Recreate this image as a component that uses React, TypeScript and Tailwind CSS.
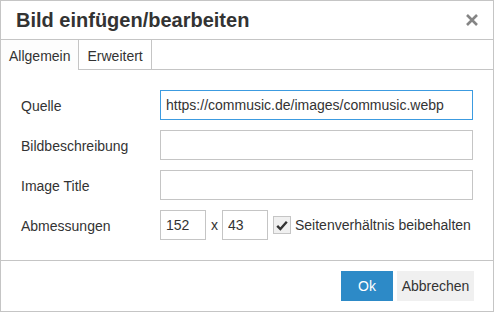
import React from 'react';

const font = { fontFamily: '"Liberation Sans", Arial, sans-serif' };

export default function App() {
  const rows = [
    { label: 'Quelle', value: 'https://commusic.de/images/commusic.webp', focused: true },
    { label: 'Bildbeschreibung', value: '' },
    { label: 'Image Title', value: '' },
  ];

  return (
    <div
      className="w-[494px] h-[312px] bg-white border border-[#c5c5c5] flex flex-col text-[#333] text-[14px]"
      style={font}
    >
      {/* Title bar */}
      <div className="h-[39px] shrink-0 border-b border-[#c5c5c5] flex items-center justify-between pl-[15px] pr-[12px]">
        <h1 className="text-[20px] leading-[20px] font-bold text-[#333]">Bild einfügen/bearbeiten</h1>
        <button className="w-[16px] h-[16px] flex items-center justify-center mr-[1px]">
          <svg width="12" height="12" viewBox="0 0 12 12">
            <path d="M1 1 L11 11 M11 1 L1 11" stroke="#858585" strokeWidth="2.6" strokeLinecap="butt" />
          </svg>
        </button>
      </div>

      {/* Tabs */}
      <div className="flex h-[30px] shrink-0">
        <div className="px-2 pt-[6px] bg-[#fdfdfd] border-r border-[#c5c5c5] leading-[20px]">Allgemein</div>
        <div className="px-2 pt-[6px] bg-white border-r border-b border-[#c5c5c5] leading-[20px]">Erweitert</div>
        <div className="flex-1 border-b border-[#c5c5c5]" />
      </div>

      {/* Body */}
      <div className="flex-1 flex flex-col gap-[10px] pt-[20px] pl-[20px] pr-[20px]">
        {rows.map(row => (
          <div key={row.label} className="flex items-center h-[30px]">
            <label className="w-[139px] shrink-0 pt-[2px]">{row.label}</label>
            <input
              type="text"
              readOnly
              value={row.value}
              className={`flex-1 h-[30px] px-[5px] border outline-none text-[#333] text-[14px] ${
                row.focused ? 'border-[#3c9be0]' : 'border-[#c5c5c5]'
              }`}
              style={font}
            />
          </div>
        ))}
        <div className="flex items-center h-[30px]">
          <label className="w-[139px] shrink-0 pt-[2px]">Abmessungen</label>
          <input
            type="text"
            readOnly
            value="152"
            className="w-[46px] h-[30px] px-[5px] border border-[#c5c5c5] outline-none text-[14px] text-[#333]"
            style={font}
          />
          <span className="ml-[5px] mr-[4px] w-[7px] pt-[1px]">x</span>
          <input
            type="text"
            readOnly
            value="43"
            className="w-[46px] h-[30px] px-[5px] border border-[#c5c5c5] outline-none text-[14px] text-[#333]"
            style={font}
          />
          <div className="ml-[5px] w-[18px] h-[18px] border border-[#c5c5c5] bg-[#f0f0f0] flex items-center justify-center">
            <svg width="12" height="11" viewBox="0 0 12 11">
              <path d="M1.2 5.8 L4.4 9 L10.8 1.8" fill="none" stroke="#333" strokeWidth="2.4" />
            </svg>
          </div>
          <span className="ml-[4px] pt-[1px]">Seitenverhältnis beibehalten</span>
        </div>
      </div>

      {/* Footer */}
      <div className="h-[51px] shrink-0 border-t border-[#c5c5c5] flex items-center justify-end gap-[4px] pr-[19px]">
        <button className="w-[52px] h-[30px] bg-[#2d8ac7] text-white text-[14px]" style={font}>Ok</button>
        <button className="w-[77px] h-[30px] bg-[#f0f0f0] text-[#333] text-[14px]" style={font}>Abbrechen</button>
      </div>
    </div>
  );
}
